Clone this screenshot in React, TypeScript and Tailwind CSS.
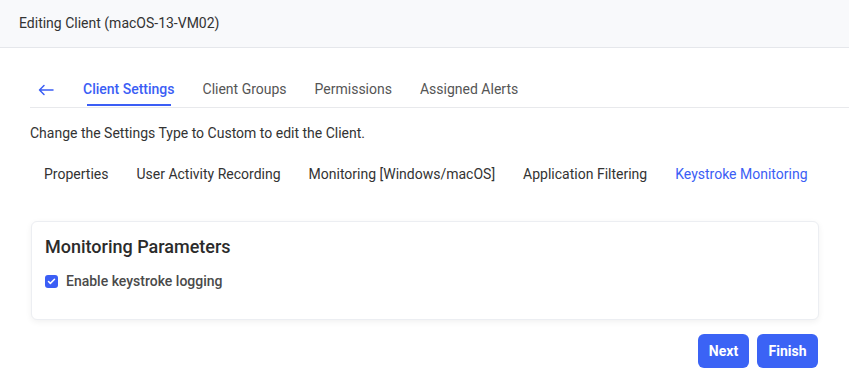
import { Check } from "lucide-react";

const mainTabs = ["Client Settings", "Client Groups", "Permissions", "Assigned Alerts"];
const subTabs = [
  "Properties",
  "User Activity Recording",
  "Monitoring [Windows/macOS]",
  "Application Filtering",
  "Keystroke Monitoring",
];

const App = () => {
  return (
    <div className="min-h-screen bg-white text-[#333] font-['Roboto',sans-serif]">
      {/* Header */}
      <div className="h-[48px] bg-[#f8f9fb] border-b border-[#e5e7eb] flex items-center pl-[19px]">
        <h1 className="text-[14px] text-[#333]">Editing Client (macOS-13-VM02)</h1>
      </div>

      <div className="pl-[30px]">
        {/* Main tabs */}
        <div className="mt-[24px] flex items-end border-b border-[#e8e9ec] h-[36px]">
          <button className="pl-[8px] pr-[29px] h-full flex items-center text-[#3b5ef5]">
            <svg width="16" height="12" viewBox="0 0 16 12" fill="none" stroke="currentColor" strokeWidth="1.5" strokeLinecap="round" strokeLinejoin="round">
              <path d="M15 6H1.5M6 1.5L1.5 6L6 10.5" />
            </svg>
          </button>
          {mainTabs.map((t, i) => (
            <div key={t} className="h-full flex flex-col items-center mr-[28px]">
              <span className={`text-[14px] leading-none mt-[10px] ${i === 0 ? "text-[#3b5ef5] font-medium" : "text-[#555]"}`}>
                {t}
              </span>
              {i === 0 && <span className="mt-auto h-[2px] w-[84px] bg-[#3b5ef5] mb-[1px]" />}
            </div>
          ))}
        </div>

        <p className="mt-[15px] text-[14px] text-[#333]">Change the Settings Type to Custom to edit the Client.</p>

        {/* Sub tabs */}
        <div className="mt-[20px] flex pl-[14px] gap-[28px] text-[14px]">
          {subTabs.map((t, i) => (
            <span key={t} className={i === subTabs.length - 1 ? "text-[#3b5ef5]" : "text-[#333]"}>
              {t}
            </span>
          ))}
        </div>

        {/* Card */}
        <div className="mt-[36px] w-[788px] ml-[1px] h-[99px] rounded-[6px] border border-[#eceef2] bg-white shadow-[0_2px_6px_rgba(0,0,0,0.06)] px-[13px] pt-[11px]">
          <h2 className="text-[18px] font-medium text-[#2b2b2b]">Monitoring Parameters</h2>
          <label className="mt-[11px] flex items-center gap-[8px]">
            <span className="w-[13px] h-[13px] rounded-[3px] bg-[#3b5ef5] flex items-center justify-center">
              <Check className="w-[9px] h-[9px] text-white" strokeWidth={4} />
            </span>
            <span className="text-[14px] font-medium text-[#4a4a4a]">Enable keystroke logging</span>
          </label>
        </div>

        {/* Buttons */}
        <div className="w-[788px] flex justify-end gap-[8px] mt-[14px]">
          <button className="h-[34px] w-[51px] rounded-[6px] bg-[#3b63f5] text-white text-[14px] font-bold">Next</button>
          <button className="h-[34px] w-[61px] rounded-[6px] bg-[#3b63f5] text-white text-[14px] font-bold">Finish</button>
        </div>
      </div>
    </div>
  );
};

export default App;
